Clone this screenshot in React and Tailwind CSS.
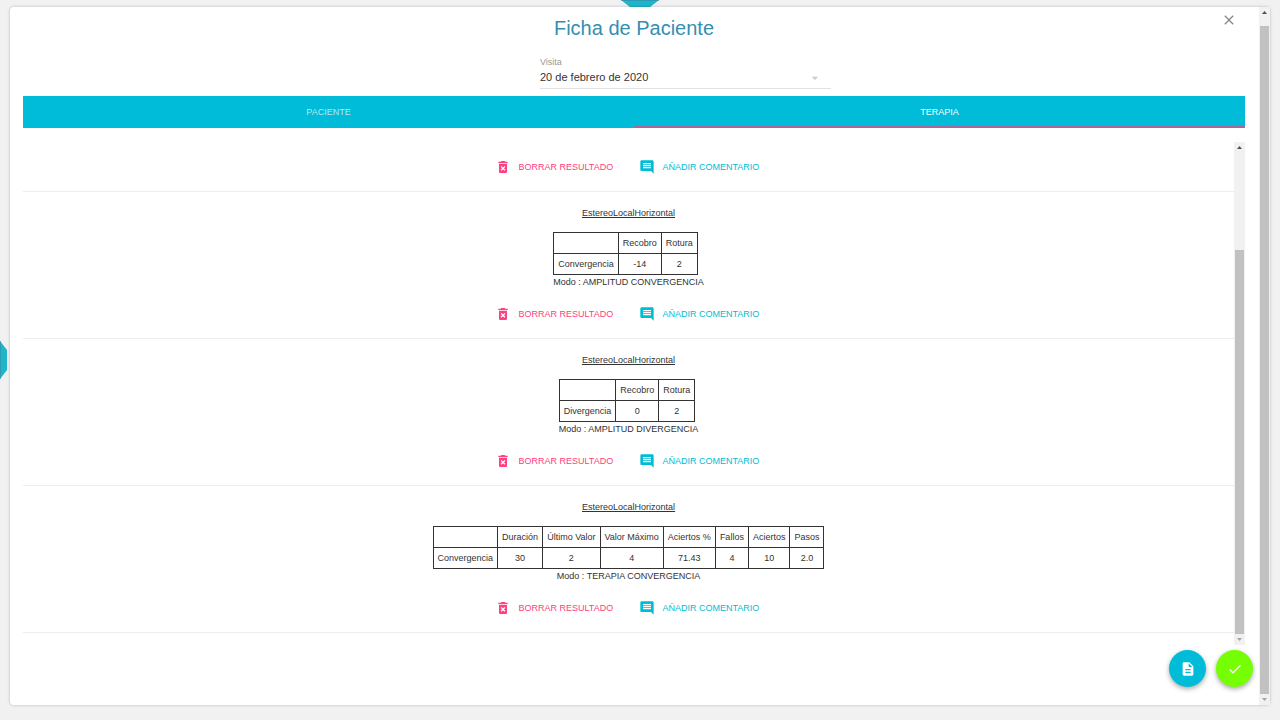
import React from 'react';
import { MdArrowDropDown, MdCheck, MdClose, MdComment, MdDeleteForever, MdDescription } from 'react-icons/md';

const results = [
  { id: 1 },
  {
    id: 2,
    name: 'EstereoLocalHorizontal',
    headers: ['Recobro', 'Rotura'],
    label: 'Convergencia',
    values: ['-14', '2'],
    mode: 'AMPLITUD CONVERGENCIA',
  },
  {
    id: 3,
    name: 'EstereoLocalHorizontal',
    headers: ['Recobro', 'Rotura'],
    label: 'Divergencia',
    values: ['0', '2'],
    mode: 'AMPLITUD DIVERGENCIA',
  },
  {
    id: 4,
    name: 'EstereoLocalHorizontal',
    headers: ['Duración', 'Último Valor', 'Valor Máximo', 'Aciertos %', 'Fallos', 'Aciertos', 'Pasos'],
    label: 'Convergencia',
    values: ['30', '2', '4', '71.43', '4', '10', '2.0'],
    mode: 'TERAPIA CONVERGENCIA',
  },
];

const ScrollArrow = ({ down, color }) => (
  <svg viewBox="0 0 5 3" className={`h-[3px] w-[5px] ${down ? 'rotate-180' : ''} ${color}`} fill="currentColor">
    <path d="M2.5 0 5 3H0z" />
  </svg>
);

const ResultTable = ({ result }) => (
  <>
    <h2 className="pt-[14px] text-center leading-[14px] underline">{result.name}</h2>
    <div className="mx-auto mt-[12px] w-fit text-center">
      <table className="border-collapse">
        <thead>
          <tr className="h-[21px]">
            <td className="border border-[#333] px-1"></td>
            {result.headers.map((header) => (
              <th key={header} scope="col" className="border border-[#333] px-1 pt-0.5 font-normal">{header}</th>
            ))}
          </tr>
        </thead>
        <tbody>
          <tr className="h-[21px]">
            <th scope="row" className="border border-[#333] px-1 pt-0.5 font-normal">{result.label}</th>
            {result.values.map((value, i) => (
              <td key={i} className="border border-[#333] px-1 pt-0.5">{value}</td>
            ))}
          </tr>
        </tbody>
      </table>
      <p className="leading-[14px]">Modo : {result.mode}</p>
    </div>
  </>
);

const Result = ({ result }) => (
  <li className="border-b border-[#eee]">
    {result.name && <ResultTable result={result} />}
    <div className="flex justify-center gap-5 pt-[17px] pb-4">
      <button type="button" className="flex h-4 w-[124px] items-center gap-2 text-[#ff4081]">
        <MdDeleteForever size={16} />
        <span className="pt-0.5">BORRAR RESULTADO</span>
      </button>
      <button type="button" className="flex h-4 w-[124px] items-center gap-2 text-[#00bcd4]">
        <MdComment size={16} />
        <span className="pt-0.5">AÑADIR COMENTARIO</span>
      </button>
    </div>
  </li>
);

const App = () => {
  return (
    <div className="relative h-screen overflow-hidden bg-[#f1f1f1] px-[10px] pt-[7px] pb-[15px] font-['Liberation_Sans',Arial,sans-serif] text-[9px] text-[#333]">
      {/* menu hexagons peeking out behind the dialog */}
      <svg viewBox="0 0 38 7" className="absolute top-0 left-1/2 h-[7px] w-[38px] -translate-x-1/2">
        <path d="M0 0H38L29 7H9z" fill="#1eb5cb" />
        <path d="M0 0H38" stroke="#3a83a0" strokeWidth="1" />
      </svg>
      <svg viewBox="0 0 7 38" className="absolute top-1/2 left-0 h-[38px] w-[7px] -translate-y-1/2">
        <path d="M0 0V38L7 29V9z" fill="#1eb5cb" />
        <path d="M0 0V38" stroke="#3a83a0" strokeWidth="1" />
      </svg>

      <main className="relative flex h-full rounded-sm bg-white shadow-[0_0_3px_rgba(0,0,0,0.25)]">
        <div className="flex min-w-0 flex-1 flex-col pr-[14px] pl-[13px]">
          <h1 className="pt-[7px] text-center text-xl leading-7 text-[#348fb0]">Ficha de Paciente</h1>
          <div className="ml-[517px] flex w-[291px] flex-col pt-[15px]">
            <label htmlFor="visita" className="leading-[10px] text-[#999]">Visita</label>
            <div className="flex items-center border-b border-[#e2e2e2]">
              <select id="visita" className="h-[21px] flex-1 appearance-none text-[11px] text-[#333] outline-none">
                <option>20 de febrero de 2020</option>
              </select>
              <MdArrowDropDown size={16} className="mr-2 text-[#ccc]" />
            </div>
          </div>

          <div role="tablist" className="mt-[7px] grid h-8 shrink-0 grid-cols-2 bg-[#00bcd8]">
            <button type="button" role="tab" aria-selected="false" className="pt-0.5 text-white/70">PACIENTE</button>
            <button type="button" role="tab" aria-selected="true" className="border-b-2 border-[#a8689c] pt-1 text-white">TERAPIA</button>
          </div>

          <div className="mt-[14px] mb-[60px] flex min-h-0 flex-1">
            <ul className="min-w-0 flex-1 overflow-hidden">
              {results.map((result) => (
                <Result key={result.id} result={result} />
              ))}
            </ul>
            <div className="flex w-[11px] flex-col items-center bg-[#f1f1f1] py-1">
              <ScrollArrow color="text-[#505050]" />
              <div className="mt-[22%] h-0 w-full grow-[10]"></div>
              <div className="w-[9px] grow-[39] bg-[#c1c1c1]"></div>
              <div className="h-1"></div>
              <ScrollArrow down color="text-[#a3a3a3]" />
            </div>
          </div>
        </div>

        <div className="flex w-[11px] flex-col items-center bg-[#f1f1f1] py-1">
          <ScrollArrow color="text-[#505050]" />
          <div className="mt-3 mb-1 w-[9px] flex-1 bg-[#c1c1c1]"></div>
          <ScrollArrow down color="text-[#a3a3a3]" />
        </div>

        <button type="button" aria-label="Cerrar" className="absolute top-[5px] right-[33px] text-[#888]">
          <MdClose size={16} />
        </button>
        <div className="absolute right-[17px] bottom-[18px] flex gap-[10px] text-white">
          <button type="button" aria-label="Informe" className="flex size-[37px] items-center justify-center rounded-full bg-[#00bcd8] shadow-[0_2px_5px_rgba(0,0,0,0.35)]">
            <MdDescription size={16} />
          </button>
          <button type="button" aria-label="Aceptar" className="flex size-[37px] items-center justify-center rounded-full bg-[#76ff03] shadow-[0_2px_5px_rgba(0,0,0,0.35)]">
            <MdCheck size={16} />
          </button>
        </div>
      </main>
    </div>
  );
};

export default App;
